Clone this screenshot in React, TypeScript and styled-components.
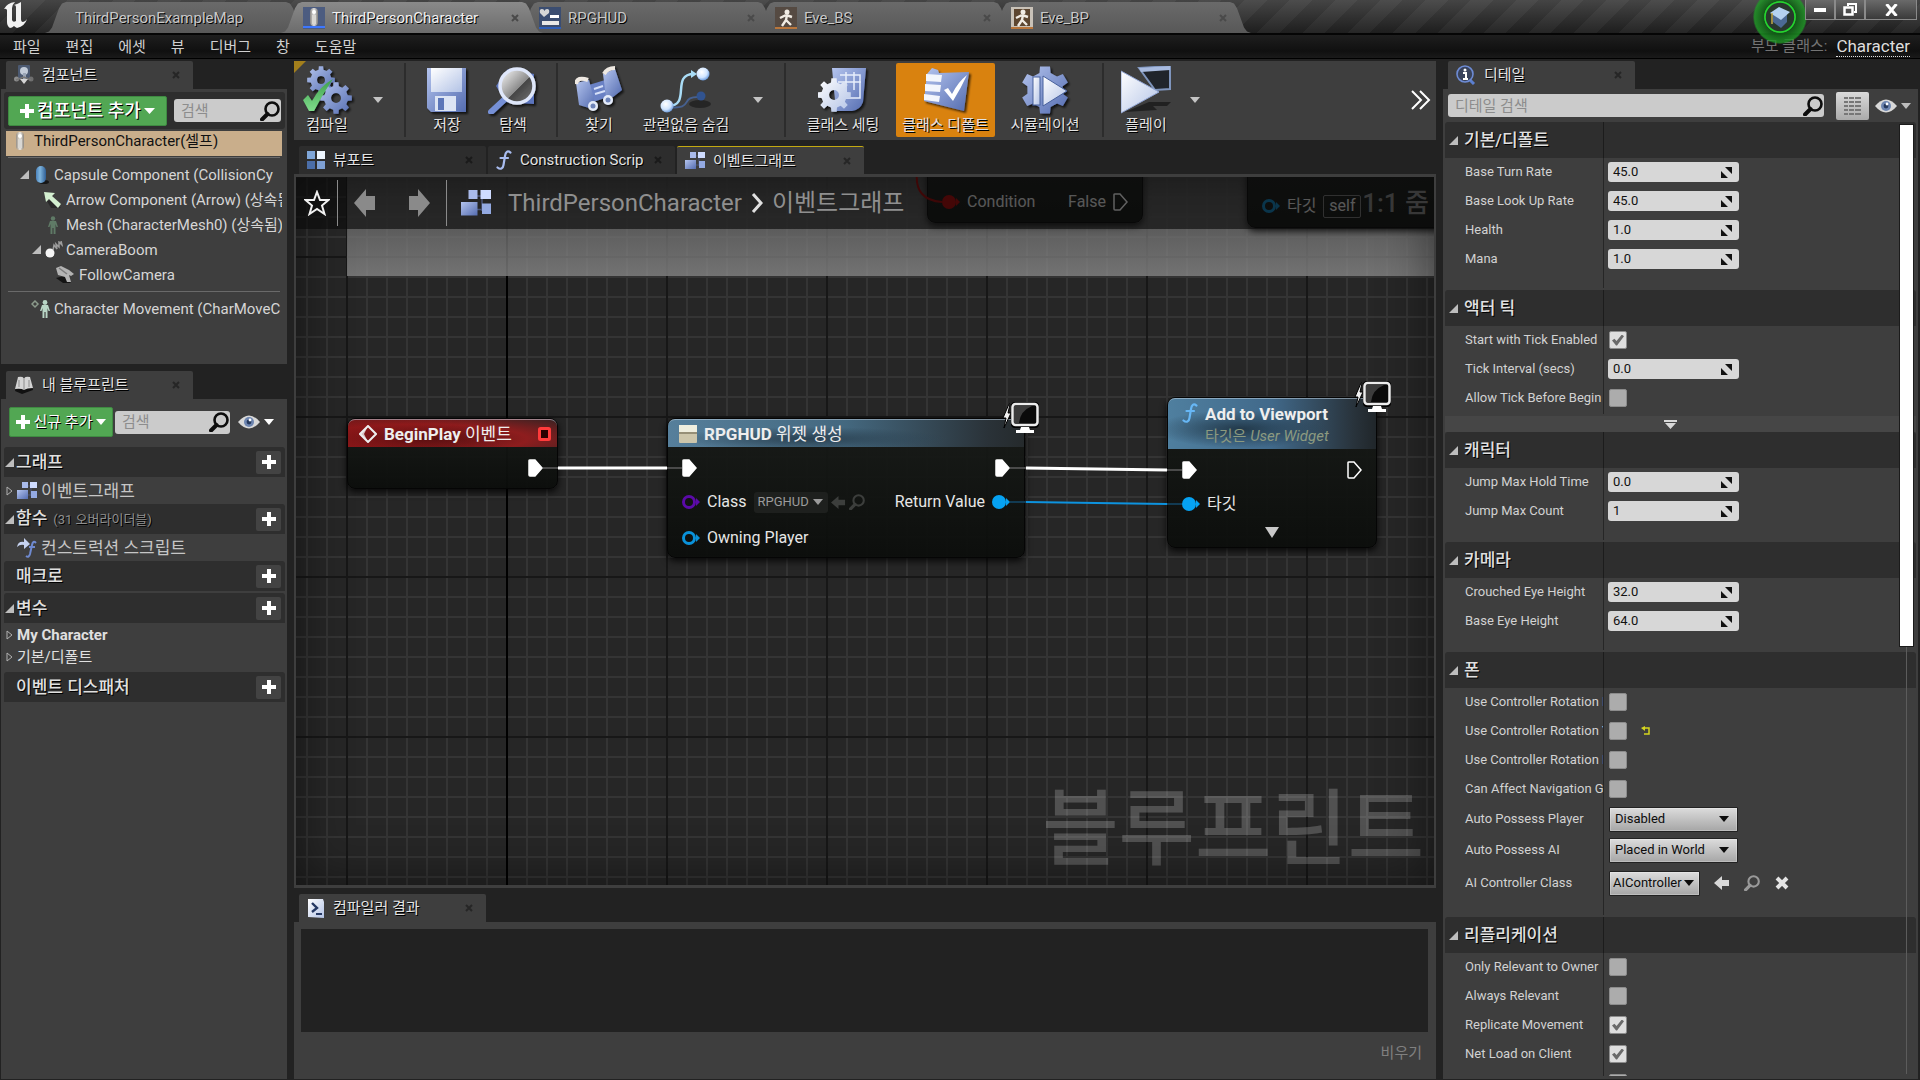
import React, { useState } from 'react';
import styled, { createGlobalStyle, css } from 'styled-components';

const GlobalStyle = createGlobalStyle`
  *, *::before, *::after { box-sizing: border-box; }
  body {
    margin: 0;
    background: #222;
    color: #dcdcdc;
    font-family: Roboto, "Noto Sans CJK KR", sans-serif;
    font-size: 15px;
    line-height: 20px;
    overflow: hidden;
  }
  button, input, select { font: inherit; color: inherit; margin: 0; }
  button { border: 0; padding: 0; background: none; cursor: pointer; }
  svg { display: block; flex: none; }
  h2, h3, p, ul { margin: 0; padding: 0; font: inherit; list-style: none; }
`;

/* ---------- shared ---------- */

const shadowText = css`
  text-shadow: 1px 1px 0 #000;
`;

const Shell = styled.div`
  display: flex;
  flex-direction: column;
  height: 100vh;
`;

const Workspace = styled.div`
  flex: 1;
  min-height: 0;
  display: grid;
  grid-template-columns: 286px minmax(0, 1fr) 475px;
  column-gap: 7px;
  padding: 2px 2px 1px 1px;
`;

const Column = styled.div<{ $gap?: number; $grow?: boolean }>`
  display: flex;
  flex-direction: column;
  flex: ${(p) => (p.$grow ? '1' : 'initial')};
  gap: ${(p) => p.$gap ?? 0}px;
  min-width: 0;
  min-height: 0;
`;

const PanelTabs = styled.div<{ $spaced?: boolean }>`
  display: flex;
  flex: none;
  gap: 2px;
  height: 28px;
  margin-top: ${(p) => (p.$spaced ? 6 : 0)}px;
  padding-left: 5px;
`;

const PanelTab = styled.div<{ $tone?: 'on' | 'off' | 'accent' }>`
  display: flex;
  align-items: center;
  gap: 8px;
  width: 187px;
  padding: 0 12px 0 8px;
  border-radius: 2px 2px 0 0;
  color: #e4e4e4;
  background: ${(p) => (p.$tone === 'off' ? '#2d2d2d' : '#3e3e3e')};
  border-top: ${(p) => (p.$tone === 'accent' ? '1px solid #c3a912' : '0')};
  ${shadowText}
  > span {
    flex: 1;
    white-space: nowrap;
  }
`;

const PanelBody = styled.section<{ $grow?: boolean }>`
  display: flex;
  flex-direction: column;
  flex: ${(p) => (p.$grow ? '1' : 'none')};
  min-height: 0;
  background: #3e3e3e;
`;

const CloseButton = styled.button`
  display: grid;
  place-items: center;
  width: 10px;
  height: 10px;
`;

/* ---------- icons ---------- */

const HiddenDefs = styled.svg`
  position: absolute;
`;

const Defs = () => (
  <HiddenDefs width="0" height="0" aria-hidden="true">
    <defs>
      <linearGradient id="blue" x1="0" y1="0" x2="1" y2="1">
        <stop offset="0" stopColor="#b4c4ee" />
        <stop offset="1" stopColor="#546cb0" />
      </linearGradient>
      <linearGradient id="pale" x1="0" y1="0" x2="1" y2="1">
        <stop offset="0" stopColor="#ffffff" />
        <stop offset="1" stopColor="#b3c3e6" />
      </linearGradient>
      <linearGradient id="green" x1="0" y1="0" x2="0" y2="1">
        <stop offset="0" stopColor="#3fa04d" />
        <stop offset="1" stopColor="#7fdc8b" />
      </linearGradient>
      <linearGradient id="glass" x1="0" y1="0" x2="1" y2="1">
        <stop offset="0" stopColor="#ffffff" />
        <stop offset="0.55" stopColor="#8b8b8b" />
        <stop offset="0.56" stopColor="#454545" />
        <stop offset="1" stopColor="#777" />
      </linearGradient>
      <radialGradient id="ball" cx="0.4" cy="0.35" r="0.7">
        <stop offset="0" stopColor="#ffffff" />
        <stop offset="0.6" stopColor="#cfe4ff" />
        <stop offset="1" stopColor="#5b8fd6" />
      </radialGradient>
      <linearGradient id="stone" x1="0" y1="0" x2="1" y2="0">
        <stop offset="0" stopColor="#8f8a84" />
        <stop offset="0.5" stopColor="#f2f0ec" />
        <stop offset="1" stopColor="#85817b" />
      </linearGradient>
      <linearGradient id="capsule" x1="0" y1="0" x2="1" y2="0">
        <stop offset="0" stopColor="#4b83bd" />
        <stop offset="0.4" stopColor="#7fb5dd" />
        <stop offset="1" stopColor="#2f5f96" />
      </linearGradient>
      <filter id="drop" x="-20%" y="-20%" width="150%" height="150%">
        <feDropShadow dx="2" dy="2" stdDeviation="1" floodColor="#000" floodOpacity="0.7" />
      </filter>
    </defs>
  </HiddenDefs>
);

const gearPath = (cx: number, cy: number, outer: number, inner: number, teeth: number) => {
  const pts: string[] = [];
  const step = (Math.PI * 2) / teeth;
  for (let i = 0; i < teeth; i++) {
    const a = i * step - Math.PI / 2;
    [
      [-0.3, inner],
      [-0.2, outer],
      [0.2, outer],
      [0.3, inner],
    ].forEach(([f, r]) => {
      pts.push(`${(cx + Math.cos(a + f * step) * r).toFixed(2)},${(cy + Math.sin(a + f * step) * r).toFixed(2)}`);
    });
  }
  return `M${pts.join('L')}Z`;
};

const Gear = ({ cx, cy, r, hole, fill, teeth = 8 }: { cx: number; cy: number; r: number; hole: number; fill: string; teeth?: number }) => (
  <path
    d={`${gearPath(cx, cy, r, r * 0.75, teeth)}M${cx - hole},${cy}a${hole},${hole} 0 1,0 ${hole * 2},0a${hole},${hole} 0 1,0 ${-hole * 2},0Z`}
    fill={fill}
    fillRule="evenodd"
  />
);

const CloseIcon = ({ color = '#262626' }: { color?: string }) => (
  <svg width="8" height="8" viewBox="0 0 8 8">
    <path d="M1 1L7 7M7 1L1 7" stroke={color} strokeWidth="2" />
  </svg>
);

const Caret = ({ w = 10, color = '#fff' }: { w?: number; color?: string }) => (
  <svg width={w} height="6" viewBox="0 0 10 6" preserveAspectRatio="none">
    <path d="M0 0H10L5 6Z" fill={color} />
  </svg>
);

const Corner = () => (
  <svg width="9" height="9" viewBox="0 0 9 9">
    <path d="M9 0V9H0Z" fill="#bdbdbd" />
  </svg>
);

const Closed = () => (
  <svg width="7" height="10" viewBox="0 0 7 10">
    <path d="M1 1L6 5L1 9Z" fill="none" stroke="#b0b0b0" />
  </svg>
);

const PlusIcon = ({ size = 14 }: { size?: number }) => (
  <svg width={size} height={size} viewBox="0 0 14 14">
    <path d="M5 0H9V5H14V9H9V14H5V9H0V5H5Z" fill="#fff" />
  </svg>
);

const SearchIcon = ({ color = '#0d0d0d', size = 20 }: { color?: string; size?: number }) => (
  <svg width={size} height={size} viewBox="0 0 20 20">
    <circle cx="12" cy="8" r="6.5" fill="none" stroke={color} strokeWidth="2.6" />
    <path d="M7.5 13L2 18.5" stroke={color} strokeWidth="4" strokeLinecap="round" />
  </svg>
);

const EyeIcon = () => (
  <svg width="22" height="14" viewBox="0 0 22 14">
    <path d="M0 7Q11 -6 22 7Q11 20 0 7Z" fill="#d8d8d8" />
    <circle cx="11" cy="7" r="5" fill="#6d85b0" />
    <circle cx="11" cy="7" r="2.4" fill="#263a5e" />
    <circle cx="12" cy="5" r="1.4" fill="#fff" />
  </svg>
);

const LeftArrow = ({ color = '#d8d8d8', size = 16 }: { color?: string; size?: number }) => (
  <svg width={size} height={size} viewBox="0 0 16 16">
    <path d="M0 8L8 1V5H15V11H8V15Z" fill={color} />
  </svg>
);

const GraphIcon = ({ w = 20 }: { w?: number }) => (
  <svg width={w} height={(w * 18) / 20} viewBox="0 0 20 18">
    <path d="M8 4H14M14 4V14M9 13H14" stroke="#49547a" />
    <rect x="5" y="0" width="6" height="6" fill="#a9baea" />
    <rect x="13" y="0" width="7" height="6" fill="#cfdcff" />
    <rect x="0" y="8" width="11" height="9" fill="url(#blue)" />
    <rect x="14" y="9" width="6" height="7" fill="#93a9e2" />
  </svg>
);

const FuncIcon = ({ color = '#a9bdf0' }: { color?: string }) => (
  <svg width="16" height="20" viewBox="0 0 16 20">
    <path d="M14.5 2.6C11.5 0 9.6 2 9 6L7.5 15C7 18.5 4.5 20 1.5 17.5M4.5 8H12" fill="none" stroke={color} strokeWidth="2.2" strokeLinecap="round" />
  </svg>
);

const ViewportIcon = () => (
  <svg width="18" height="18" viewBox="0 0 18 18">
    <rect x="0" y="0" width="8" height="8" fill="#7fa6d8" />
    <rect x="10" y="0" width="8" height="8" fill="#eef6ff" />
    <rect x="0" y="10" width="8" height="8" fill="#4b6ea8" />
    <rect x="10" y="10" width="8" height="8" fill="#7ea0d4" />
  </svg>
);

const ComponentsIcon = () => (
  <svg width="20" height="20" viewBox="0 0 20 20">
    <rect x="4" y="0" width="12" height="13" rx="1" fill="#4c5a72" />
    <circle cx="10" cy="6" r="4" fill="#c2cbd8" />
    <rect x="9" y="8" width="3" height="6" fill="#9aa5b6" />
    <circle cx="2.5" cy="14" r="2.5" fill="#8d8d8d" />
    <circle cx="17" cy="14" r="2.5" fill="#6f6f6f" />
    <path d="M2 15L10 12L17 15" fill="none" stroke="#777" strokeWidth="1.5" />
    <path d="M6 14H14L10 19Z" fill="#d5d5d5" />
  </svg>
);

const BookIcon = () => (
  <svg width="20" height="19" viewBox="0 0 20 19">
    <path d="M1 15L4 2L10 1L16 2L19 14L8 18Z" fill="#111" />
    <path d="M1 13L4 1Q8 0 10 2Q12 0 16 1L19 12Q13 12 10 14Q7 12 1 13Z" fill="#d4d4d4" />
    <path d="M10 2V14M5 4V11M15 4V11" stroke="#8c8c8c" />
  </svg>
);

const DetailsIcon = () => (
  <svg width="20" height="20" viewBox="0 0 20 20">
    <path d="M13 14L18 19" stroke="#5b7fd0" strokeWidth="3" />
    <circle cx="9" cy="9" r="8" fill="#39435c" stroke="#6d8bd4" strokeWidth="1.6" />
    <path d="M7 8H10V14M7 14H12" fill="none" stroke="#fff" strokeWidth="2" />
    <circle cx="9" cy="5" r="1.5" fill="#fff" />
  </svg>
);

const LogIcon = () => (
  <svg width="18" height="19" viewBox="0 0 18 19">
    <path d="M1 0H16L17 3V19L1 18Z" fill="url(#pale)" />
    <path d="M5 4L10 9L5 13" fill="none" stroke="#253863" strokeWidth="2.4" />
    <path d="M9 15H15" stroke="#253863" strokeWidth="2" />
  </svg>
);

const PawnIcon = ({ framed }: { framed?: boolean }) => (
  <svg width={framed ? 22 : 10} height="22" viewBox={framed ? '0 0 22 22' : '6 0 10 22'}>
    {framed && <rect width="22" height="22" fill="#4c5c80" />}
    {framed && <rect y="19" width="22" height="2" fill="#3d77ff" />}
    <rect x="7" y="1" width="8" height="18" rx="4" fill="url(#stone)" opacity="0.9" />
    <circle cx="11" cy="5" r="2" fill="#fff" />
    <path d="M9 8H13V17H9Z" fill="#d9d7d3" />
  </svg>
);

const WidgetIcon = () => (
  <svg width="22" height="22" viewBox="0 0 22 22">
    <rect width="22" height="22" fill="#3b4d70" />
    <path d="M5 10L1 6Q0 2 3 2Q5 2 5.5 4Q6 2 8 2Q11 2 10 6Z" fill="#d6d6d6" />
    <rect x="11" y="8" width="9" height="3" fill="#fff" />
    <rect x="3" y="14" width="17" height="4" fill="#e8e8e8" />
    <rect y="20" width="22" height="2" fill="#2f5fb8" />
  </svg>
);

const AnimIcon = ({ boxed }: { boxed?: boolean }) => (
  <svg width="22" height="22" viewBox="0 0 22 22">
    <rect width="22" height="22" fill={boxed ? '#c9c2b8' : '#554a42'} />
    {boxed && <rect x="3" y="2" width="16" height="17" fill="#5d4630" />}
    <circle cx="12" cy="5" r="2.5" fill="#f1ece4" />
    <path d="M11 8L5 11M11 8L17 10M12 8L11 13L7 19M11 13L16 18" stroke="#f1ece4" strokeWidth="2.4" fill="none" />
    <rect y="20" width="22" height="2" fill="#b8763c" />
  </svg>
);

const EngineLogo = () => (
  <svg width="26" height="28" viewBox="0 0 26 28">
    <path
      d="M1 8Q4 2 12 1Q9 4 9 7V19Q10 22 13 20V6Q13 4 11 4Q15 3 18 1V18Q18 21 20 21Q22 21 24 18Q22 25 14 27Q12 26 11 25Q9 27 7 27Q4 25 4 21V9Q3 7 1 8Z"
      fill="#f2f2f2"
    />
  </svg>
);

const ArrowComp = () => (
  <svg width="19" height="18" viewBox="0 0 19 18">
    <path d="M4 10L8 9L18 17L8 17Z" fill="#1a1a1a" opacity="0.6" />
    <path d="M1 1L12 2L9 5L18 13L15 17L6 8L3 11Z" fill="#d3efd0" />
  </svg>
);

const humanBody = 'M3 5H9L11 11H9.5L8.5 8V18H6.6V12H5.4V18H3.5V8L2.5 11H1Z';

const Human = () => (
  <svg width="12" height="18" viewBox="0 0 12 18">
    <circle cx="6" cy="2.5" r="2.2" fill="#5f7a66" />
    <path d={humanBody} fill="#5f7a66" />
  </svg>
);

const MovementIcon = () => (
  <svg width="19" height="18" viewBox="0 0 19 18">
    <path d="M4 1L7 4L4 7L1 4Z" fill="none" stroke="#8b9a8b" strokeWidth="1.5" />
    <g transform="translate(8 0)">
      <circle cx="6" cy="2.5" r="2.4" fill="#b9d6c6" />
      <path d={humanBody} fill="#b9d6c6" />
    </g>
  </svg>
);

const CapsuleIcon = () => (
  <svg width="14" height="20" viewBox="0 0 14 20">
    <ellipse cx="9" cy="17" rx="5" ry="2" fill="#161616" />
    <rect x="1" y="1" width="10" height="17" rx="5" fill="url(#capsule)" />
  </svg>
);

const BoomIcon = () => (
  <svg width="18" height="18" viewBox="0 0 18 18">
    <path d="M8 9L9 4L12 8L11 3L14 6L14 1L17 4L16 0" fill="none" stroke="#9c9c9c" strokeWidth="1.5" />
    <circle cx="5" cy="12" r="4.5" fill="#f4f4f4" />
  </svg>
);

const CameraIcon = () => (
  <svg width="20" height="18" viewBox="0 0 20 18">
    <path d="M1 12L9 10L16 17L8 17Z" fill="#141414" />
    <path d="M1 2L6 0L14 4L19 8L16 10L14 9L16 16L12 16L10 11L3 9Z" fill="#b3b3b3" />
    <path d="M4 2L12 8" stroke="#7c7c7c" strokeWidth="1.5" />
  </svg>
);

const CompileIcon = () => (
  <svg width="50" height="48" viewBox="0 0 50 48" filter="url(#drop)">
    <Gear cx={19} cy={14} r={14} hole={4} fill="url(#blue)" />
    <Gear cx={34} cy={32} r={16} hole={5} fill="url(#blue)" />
    <path d="M1 34L6 29L10 35Q18 20 31 13Q22 26 12 45L7 45Z" fill="url(#green)" />
  </svg>
);

const SaveIcon = () => (
  <svg width="40" height="48" viewBox="0 0 40 48" filter="url(#drop)">
    <path d="M0 2H39V46H4L0 42Z" fill="url(#blue)" />
    <rect x="4" y="2" width="31" height="24" fill="url(#pale)" />
    <rect x="8" y="30" width="21" height="15" fill="#dce4f4" />
    <rect x="11" y="32" width="6" height="12" fill="#5b76b8" />
  </svg>
);

const BrowseIcon = () => (
  <svg width="50" height="48" viewBox="0 0 50 48" filter="url(#drop)">
    <path d="M8 20L20 3L46 8V38L18 36Z" fill="#5c74bd" />
    <path d="M17 33L3 46" stroke="#7690d6" strokeWidth="6" strokeLinecap="round" />
    <circle cx="29" cy="20" r="17" fill="url(#glass)" stroke="#dfe7fa" strokeWidth="3.5" />
  </svg>
);

const FindIcon = () => (
  <svg width="48" height="48" viewBox="0 0 48 48" filter="url(#drop)">
    <path d="M14 19L30 14L36 30L18 36Z" fill="#6a81c4" />
    <path d="M1 17L14 14L20 37L14 42L4 39Z" fill="url(#blue)" />
    <path d="M28 8L40 3L47 24L38 31L31 31Z" fill="url(#blue)" />
    <path d="M1 18Q2 10 13 14" fill="none" stroke="#efe9e2" strokeWidth="4" />
    <path d="M29 8Q32 2 40 2" fill="none" stroke="#efe9e2" strokeWidth="4" />
    <path d="M19 23L28 20M20 28L30 25" stroke="#d6e0f8" strokeWidth="2" />
    <circle cx="18" cy="40" r="5" fill="#e4ebf9" />
    <circle cx="33" cy="34" r="5" fill="#e4ebf9" />
    <circle cx="18" cy="40" r="2.5" fill="#6d83b8" />
    <circle cx="33" cy="34" r="2.5" fill="#6d83b8" />
  </svg>
);

const HideIcon = () => (
  <svg width="52" height="48" viewBox="0 0 52 48">
    <ellipse cx="40" cy="38" rx="11" ry="4" fill="#151515" opacity="0.6" />
    <path d="M8 41C36 44 18 30 40 31" fill="none" stroke="#46608f" strokeWidth="2" />
    <path d="M8 40C32 40 10 8 34 8" fill="none" stroke="#a9dcf6" strokeWidth="2.5" />
    <path d="M31 4L37 8L31 12Z" fill="#a9dcf6" />
    <circle cx="43" cy="8" r="6.5" fill="url(#ball)" />
    <circle cx="41" cy="30" r="4.5" fill="#31538f" />
    <circle cx="7" cy="40" r="6.5" fill="url(#ball)" />
  </svg>
);

const ClassSettingsIcon = () => (
  <svg width="50" height="48" viewBox="0 0 50 48" filter="url(#drop)">
    <path d="M14 2H48L45 36Q42 44 34 45H18Z" fill="url(#blue)" />
    <path d="M22 9H42V32H24M28 6V30M36 6V24M20 16H43" fill="none" stroke="#e7eefc" strokeWidth="1.5" />
    <Gear cx={16} cy={29} r={17} hole={5} fill="url(#pale)" />
  </svg>
);

const ClassDefaultsIcon = () => (
  <svg width="48" height="48" viewBox="0 0 48 48" filter="url(#drop)">
    <path d="M5 8L10 2L16 4L17 7L47 6L42 45L2 35Z" fill="url(#blue)" />
    <path d="M4 8L20 9L19 16L4 15ZM3 18L19 19L18 26L3 25ZM2 28L18 30L17 36L2 34Z" fill="#f3f6fc" />
    <path d="M22 24L26 22L30 28Q36 16 45 9Q39 22 31 35Z" fill="#fff" />
  </svg>
);

const SimulateIcon = () => (
  <svg width="48" height="48" viewBox="0 0 48 48" filter="url(#drop)">
    <Gear cx={24} cy={24} r={24} hole={1} fill="url(#blue)" teeth={6} />
    <rect x="12" y="11" width="7" height="28" fill="url(#pale)" stroke="#47609c" />
    <path d="M22 10L46 25L22 40Z" fill="url(#pale)" stroke="#47609c" />
  </svg>
);

const PlayIcon = () => (
  <svg width="50" height="48" viewBox="0 0 50 48">
    <path d="M4 46L28 36L50 36L46 40L32 40L36 44Z" fill="#151515" opacity="0.7" />
    <path d="M18 2L49 0V23L34 24Z" fill="#20242b" stroke="#7f95bd" strokeWidth="2" />
    <path d="M18 2L49 0V4L20 6Z" fill="#a9bbdf" />
    <path d="M0 5L38 26L0 47Z" fill="url(#pale)" stroke="#93a7d6" />
  </svg>
);

/* ---------- title bar ---------- */

const TitleBar = styled.header`
  display: flex;
  align-items: flex-end;
  flex: none;
  height: 35px;
  padding-left: 45px;
  border-bottom: 2px solid #050505;
  position: relative;
  background: linear-gradient(rgba(90, 90, 90, 0.55), rgba(20, 20, 20, 0.55)),
    repeating-linear-gradient(135deg, #2a2a2a 0 16px, #3c3c3c 16px 32px);
`;

const Logo = styled.div`
  position: absolute;
  left: 3px;
  top: 1px;
`;

const DocTabs = styled.nav`
  display: flex;
  flex: 1;
  min-width: 0;
`;

const DocTab = styled.div<{ $active?: boolean; $plain?: boolean }>`
  display: flex;
  align-items: center;
  gap: 7px;
  width: 262px;
  height: 31px;
  padding: 0 23px 0 ${(p) => (p.$plain ? 30 : 22)}px;
  margin-right: -26px;
  color: ${(p) => (p.$active ? '#f0f0f0' : '#c8c8c8')};
  background: ${(p) => (p.$active ? 'linear-gradient(#8a8a8a, #6c6c6c)' : 'linear-gradient(#6a6a6a, #585858)')};
  z-index: ${(p) => (p.$active ? 2 : 1)};
  clip-path: polygon(
    0 100%, 4px 95%, 7px 82%, 14px 20%, 17px 5%, 21px 0,
    calc(100% - 21px) 0, calc(100% - 17px) 5%, calc(100% - 14px) 20%, calc(100% - 7px) 82%, calc(100% - 4px) 95%, 100% 100%
  );
  ${shadowText}
  > span { flex: 1; white-space: nowrap; }
`;

const TutorialOrb = styled.button`
  position: absolute;
  right: 113px;
  top: -11px;
  width: 54px;
  height: 56px;
  z-index: 3;
`;

const WindowButtons = styled.div`
  display: flex;
  align-self: flex-start;
  padding-right: 3px;
  z-index: 4;
`;

const WindowButton = styled.button<{ $wide?: boolean }>`
  display: grid;
  place-items: center;
  width: ${(p) => (p.$wide ? 52 : 30)}px;
  height: 20px;
  border: 1px solid #8a8a8a;
  border-top: 0;
  background: linear-gradient(#6a6a6a, #3a3a3a);
`;

const MenuBar = styled.nav`
  display: flex;
  align-items: center;
  flex: none;
  height: 24px;
  padding: 0 10px 0 13px;
  gap: 25px;
  background: linear-gradient(#1e1e1e, #101010 70%, #1a1a1a);
  border-bottom: 1px solid #000;
  color: #d0d0d0;
`;

const ParentClass = styled.div`
  display: flex;
  gap: 9px;
  margin-left: auto;
  color: #747474;
  a {
    color: #dedede;
    font-size: 17px;
    text-decoration: none;
    border-bottom: 1px dotted #dedede;
  }
`;

const docs = [
  { name: 'ThirdPersonExampleMap', icon: null },
  { name: 'ThirdPersonCharacter', icon: <PawnIcon framed />, active: true },
  { name: 'RPGHUD', icon: <WidgetIcon /> },
  { name: 'Eve_BS', icon: <AnimIcon /> },
  { name: 'Eve_BP', icon: <AnimIcon boxed /> },
];

const TopBars = () => (
  <>
    <TitleBar>
      <Logo><EngineLogo /></Logo>
      <DocTabs>
        {docs.map((d) => (
          <DocTab key={d.name} $active={d.active} $plain={!d.icon}>
            {d.icon}
            <span>{d.name}</span>
            {d.icon && <CloseButton aria-label="탭 닫기"><CloseIcon color="#4a4a4a" /></CloseButton>}
          </DocTab>
        ))}
      </DocTabs>
      <TutorialOrb aria-label="튜토리얼">
        <svg width="54" height="56" viewBox="0 0 54 56">
          <defs>
            <radialGradient id="orb">
              <stop offset="0.5" stopColor="#0e3a12" />
              <stop offset="0.56" stopColor="#22c02a" />
              <stop offset="0.6" stopColor="#125c17" stopOpacity="0.9" />
              <stop offset="0.94" stopColor="#1f9c26" stopOpacity="0.8" />
              <stop offset="1" stopColor="#1f9c26" stopOpacity="0.2" />
            </radialGradient>
          </defs>
          <circle cx="27" cy="28" r="27" fill="url(#orb)" />
          <circle cx="27" cy="28" r="15" fill="#28382c" stroke="#25d62f" strokeWidth="1.5" />
          <path d="M20 25V33L28 39L34 33V25Z" fill="#4c6a94" />
          <path d="M17 24L26 18L37 23L28 31Z" fill="#b4d2f0" />
          <path d="M19 24V35" stroke="#c5a94a" strokeWidth="1.5" />
        </svg>
      </TutorialOrb>
      <WindowButtons>
        <WindowButton aria-label="최소화">
          <svg width="12" height="4"><rect width="12" height="4" fill="#fff" /></svg>
        </WindowButton>
        <WindowButton aria-label="이전 크기로">
          <svg width="14" height="13" viewBox="0 0 14 13">
            <path d="M5 3V1H13V9H11" fill="none" stroke="#fff" strokeWidth="2" />
            <rect x="1.5" y="4.5" width="8" height="7" fill="none" stroke="#fff" strokeWidth="2.5" />
          </svg>
        </WindowButton>
        <WindowButton $wide aria-label="닫기">
          <svg width="13" height="12" viewBox="0 0 13 12">
            <path d="M1.5 0L11.5 12M11.5 0L1.5 12" stroke="#fff" strokeWidth="3" />
          </svg>
        </WindowButton>
      </WindowButtons>
    </TitleBar>
    <MenuBar>
      {['파일', '편집', '에셋', '뷰', '디버그', '창', '도움말'].map((m) => (
        <button key={m}>{m}</button>
      ))}
      <ParentClass>
        <span>부모 클래스:</span>
        <a href="#character">Character</a>
      </ParentClass>
    </MenuBar>
  </>
);

/* ---------- left column ---------- */

const GreenButton = styled.button<{ $large?: boolean }>`
  display: flex;
  align-items: center;
  justify-content: center;
  gap: ${(p) => (p.$large ? 3 : 4)}px;
  width: ${(p) => (p.$large ? 159 : 104)}px;
  height: 30px;
  border: 1px solid #3f8a42;
  border-radius: 2px;
  background: #52a753;
  color: #fff;
  font-size: ${(p) => (p.$large ? 18 : 15)}px;
  font-weight: ${(p) => (p.$large ? 500 : 400)};
  white-space: nowrap;
  ${shadowText}
`;

const SearchField = styled.label`
  display: flex;
  align-items: center;
  flex: 1;
  min-width: 0;
  height: 23px;
  padding: 0 1px 0 7px;
  border-radius: 3px;
  background: #cbcbcb;
  input {
    flex: 1;
    min-width: 0;
    width: 0;
    padding: 0;
    border: 0;
    outline: 0;
    background: none;
    color: #222;
    &::placeholder { color: #8d8d8d; opacity: 1; }
  }
`;

const ComponentActions = styled.div`
  display: flex;
  align-items: center;
  gap: 7px;
  height: 37px;
  margin: 3px 2px 2px 3px;
  padding: 0 4px;
  border-radius: 3px;
  background: #2e2e2e;
`;

const ComponentTree = styled.ul`
  height: 233px;
  padding: 0 5px;
`;

const TreeRow = styled.li<{ $indent: number; $selected?: boolean }>`
  display: flex;
  align-items: ${(p) => (p.$selected ? 'flex-start' : 'center')};
  gap: 4px;
  height: 25px;
  padding-left: ${(p) => p.$indent}px;
  overflow: hidden;
  white-space: nowrap;
  color: ${(p) => (p.$selected ? '#111' : '#d6d6d6')};
  background: ${(p) => (p.$selected ? '#c9ae8b' : 'none')};
`;

const TreeIcon = styled.span<{ $w: number }>`
  display: flex;
  justify-content: center;
  width: ${(p) => p.$w}px;
  flex: none;
`;

const TreeLine = styled.li<{ $tight?: boolean }>`
  height: 1px;
  margin: ${(p) => (p.$tight ? '1px 2px 4px' : '4px 2px')};
  background: #6a6a6a;
`;

const BlueprintActions = styled.div`
  display: flex;
  align-items: center;
  gap: 2px;
  height: 48px;
  padding: 0 13px 2px 8px;
`;

const ViewOptions = styled.button`
  display: flex;
  align-items: center;
  gap: 4px;
  padding-left: 6px;
`;

const SectionHead = styled.div<{ $gap?: number }>`
  display: flex;
  align-items: center;
  gap: 2px;
  height: 30px;
  margin: 0 2px ${(p) => p.$gap ?? 0}px 3px;
  padding: 0 4px 0 1px;
  border-radius: 3px 3px 0 0;
  background: #2e2e2e;
  h3 {
    flex: 1;
    font-size: 17px;
    font-weight: 500;
    color: #e0e0e0;
    ${shadowText}
  }
  small {
    margin-left: 6px;
    font-size: 13px;
    font-weight: 400;
    color: #8f8f8f;
  }
`;

const Twisty = styled.span`
  display: flex;
  align-items: center;
  width: 9px;
  height: 9px;
`;

const AddButton = styled.button`
  display: grid;
  place-items: center;
  width: 25px;
  height: 23px;
  border-radius: 2px;
  background: #434343;
`;

const BlueprintItem = styled.div<{ $small?: boolean; $bold?: boolean; $inset?: boolean }>`
  display: flex;
  align-items: center;
  gap: 4px;
  height: ${(p) => (p.$small ? 22 : 27)}px;
  padding-left: ${(p) => (p.$inset ? 16 : 5)}px;
  white-space: nowrap;
  color: ${(p) => (p.$small ? '#e0e0e0' : '#c6c6c6')};
  font-size: ${(p) => (p.$small ? 15 : 17)}px;
  font-weight: ${(p) => (p.$bold ? 700 : 400)};
`;

const Group = styled.div`
  padding: 1px 0 4px;
`;

const LeftColumn = () => (
  <Column $gap={7}>
    <div>
      <PanelTabs>
        <PanelTab>
          <ComponentsIcon />
          <span>컴포넌트</span>
          <CloseButton aria-label="컴포넌트 닫기"><CloseIcon /></CloseButton>
        </PanelTab>
      </PanelTabs>
      <PanelBody>
        <ComponentActions>
          <GreenButton $large><PlusIcon />컴포넌트 추가<Caret w={11} /></GreenButton>
          <SearchField>
            <input type="text" placeholder="검색" aria-label="컴포넌트 검색" />
            <SearchIcon />
          </SearchField>
        </ComponentActions>
        <ComponentTree>
          <TreeRow $indent={4} $selected>
            <TreeIcon $w={20}><PawnIcon /></TreeIcon>ThirdPersonCharacter(셀프)
          </TreeRow>
          <TreeLine $tight />
          <TreeRow $indent={14}><Corner /><TreeIcon $w={17}><CapsuleIcon /></TreeIcon>Capsule Component (CollisionCy</TreeRow>
          <TreeRow $indent={37}><TreeIcon $w={19}><ArrowComp /></TreeIcon>Arrow Component (Arrow) (상속됨</TreeRow>
          <TreeRow $indent={37}><TreeIcon $w={19}><Human /></TreeIcon>Mesh (CharacterMesh0) (상속됨)</TreeRow>
          <TreeRow $indent={26}><Corner /><TreeIcon $w={17}><BoomIcon /></TreeIcon>CameraBoom</TreeRow>
          <TreeRow $indent={49}><TreeIcon $w={20}><CameraIcon /></TreeIcon>FollowCamera</TreeRow>
          <TreeLine />
          <TreeRow $indent={25}><TreeIcon $w={19}><MovementIcon /></TreeIcon>Character Movement (CharMoveC</TreeRow>
        </ComponentTree>
      </PanelBody>
    </div>
    <Column $grow>
      <PanelTabs>
        <PanelTab>
          <BookIcon />
          <span>내 블루프린트</span>
          <CloseButton aria-label="내 블루프린트 닫기"><CloseIcon /></CloseButton>
        </PanelTab>
      </PanelTabs>
      <PanelBody $grow>
        <BlueprintActions>
          <GreenButton><PlusIcon />신규 추가<Caret w={10} /></GreenButton>
          <SearchField>
            <input type="text" placeholder="검색" aria-label="블루프린트 검색" />
            <SearchIcon />
          </SearchField>
          <ViewOptions aria-label="보기 옵션"><EyeIcon /><Caret /></ViewOptions>
        </BlueprintActions>
        <SectionHead><Twisty><Corner /></Twisty><h3>그래프</h3><AddButton aria-label="그래프 추가"><PlusIcon /></AddButton></SectionHead>
        <BlueprintItem><Closed /><GraphIcon />이벤트그래프</BlueprintItem>
        <SectionHead><Twisty><Corner /></Twisty><h3>함수<small>(31 오버라이더블)</small></h3><AddButton aria-label="함수 추가"><PlusIcon /></AddButton></SectionHead>
        <BlueprintItem $inset>
          <svg width="20" height="20" viewBox="0 0 20 20">
            <path d="M0 9Q1 3 7 4V0L13 6L7 11V7Q3 6 0 9Z" fill="#c6d2f0" />
            <path d="M19 5Q16 2 15 7L13 16Q12 20 9 18M12 9H18" fill="none" stroke="#6f8ad0" strokeWidth="2" />
          </svg>
          컨스트럭션 스크립트
        </BlueprintItem>
        <SectionHead $gap={2}><Twisty /><h3>매크로</h3><AddButton aria-label="매크로 추가"><PlusIcon /></AddButton></SectionHead>
        <SectionHead><Twisty><Corner /></Twisty><h3>변수</h3><AddButton aria-label="변수 추가"><PlusIcon /></AddButton></SectionHead>
        <Group>
          <BlueprintItem $small $bold><Closed />My Character</BlueprintItem>
          <BlueprintItem $small><Closed />기본/디폴트</BlueprintItem>
        </Group>
        <SectionHead><Twisty /><h3>이벤트 디스패처</h3><AddButton aria-label="이벤트 디스패처 추가"><PlusIcon /></AddButton></SectionHead>
      </PanelBody>
    </Column>
  </Column>
);

/* ---------- toolbar ---------- */

const Toolbar = styled.div`
  display: flex;
  align-items: stretch;
  flex: none;
  height: 79px;
  padding: 2px 5px 3px 2px;
  margin-bottom: 6px;
  background: linear-gradient(135deg, #a37f1c 8px, #3e3e3e 9px);
`;

const ToolGroup = styled.div<{ $pad: string }>`
  display: flex;
  align-items: stretch;
  padding: ${(p) => p.$pad};
  border-right: 2px solid #2c2c2c;
  &:last-of-type { border-right: 0; }
`;

const ToolButton = styled.button<{ $w: number; $active?: boolean }>`
  display: flex;
  flex-direction: column;
  align-items: center;
  gap: 1px;
  width: ${(p) => p.$w}px;
  padding-top: 3px;
  border-radius: 2px;
  background: ${(p) => (p.$active ? '#d9820f' : 'none')};
  color: #e2e2e2;
  white-space: nowrap;
  ${shadowText}
`;

const DropButton = styled.button<{ $w: number }>`
  display: grid;
  place-items: center;
  width: ${(p) => p.$w}px;
  padding-bottom: 1px;
`;

const MoreButton = styled.button`
  margin-left: auto;
`;

const EditorToolbar = () => (
  <Toolbar>
    <ToolGroup $pad="0 6px 0 0">
      <ToolButton $w={62}><CompileIcon />컴파일</ToolButton>
      <DropButton $w={40} aria-label="컴파일 옵션"><Caret color="#c4c4c4" /></DropButton>
    </ToolGroup>
    <ToolGroup $pad="0 10px 0 8px">
      <ToolButton $w={66}><SaveIcon />저장</ToolButton>
      <ToolButton $w={66}><BrowseIcon />탐색</ToolButton>
    </ToolGroup>
    <ToolGroup $pad="0 8px">
      <ToolButton $w={66}><FindIcon />찾기</ToolButton>
      <ToolButton $w={108}><HideIcon />관련없음 숨김</ToolButton>
      <DropButton $w={36} aria-label="숨김 옵션"><Caret color="#c4c4c4" /></DropButton>
    </ToolGroup>
    <ToolGroup $pad="0 7px 0 4px">
      <ToolButton $w={106}><ClassSettingsIcon />클래스 세팅</ToolButton>
      <ToolButton $w={99} $active><ClassDefaultsIcon />클래스 디폴트</ToolButton>
      <ToolButton $w={100}><SimulateIcon />시뮬레이션</ToolButton>
    </ToolGroup>
    <ToolGroup $pad="0 0 0 9px">
      <ToolButton $w={66}><PlayIcon />플레이</ToolButton>
      <DropButton $w={32} aria-label="플레이 옵션"><Caret color="#c4c4c4" /></DropButton>
    </ToolGroup>
    <MoreButton aria-label="도구 더 보기">
      <svg width="20" height="20" viewBox="0 0 20 20">
        <path d="M1 1L10 10L1 19M9 1L18 10L9 19" fill="none" stroke="#fff" strokeWidth="2" />
      </svg>
    </MoreButton>
  </Toolbar>
);

/* ---------- graph ---------- */

const GraphFrame = styled.section`
  flex: 1;
  min-height: 0;
  display: flex;
  padding: 3px 2px;
  background: #3e3e3e;
`;

const Canvas = styled.div`
  position: relative;
  flex: 1;
  overflow: hidden;
  background-color: #262626;
  background-image:
    linear-gradient(90deg, #000 2px, transparent 2px),
    linear-gradient(90deg, #171717 2px, transparent 2px),
    linear-gradient(#171717 2px, transparent 2px),
    linear-gradient(90deg, #343434 2px, transparent 2px),
    linear-gradient(#343434 2px, transparent 2px);
  background-size: 4000px 100%, 160px 100%, 100% 160px, 20px 100%, 100% 20px;
  background-position: 210px 0, 50px 0, 0 79px, 10px 0, 0 19px;
`;

const Vignette = styled.div`
  position: absolute;
  inset: 0;
  box-shadow: inset 0 0 50px rgba(0, 0, 0, 0.5);
  pointer-events: none;
`;

const CommentBox = styled.div`
  position: absolute;
  left: 51px;
  right: 0;
  top: 0;
  height: 99px;
  background: linear-gradient(rgba(110, 110, 110, 0.75) 50%, rgba(140, 140, 140, 0.75));
`;

const Watermark = styled.div`
  position: absolute;
  right: 10px;
  bottom: 10px;
  font-size: 83px;
  line-height: 90px;
  font-weight: 500;
  color: rgba(255, 255, 255, 0.2);
`;

const Breadcrumb = styled.div`
  position: absolute;
  inset: 0 0 auto 0;
  display: flex;
  align-items: center;
  height: 52px;
  background: rgba(10, 10, 10, 0.65);
  color: #8f8f8f;
  font-size: 24px;
  line-height: 32px;
`;

const CrumbButton = styled.button<{ $w: number; $rule?: boolean }>`
  display: grid;
  place-items: center;
  width: ${(p) => p.$w}px;
  height: 46px;
  border-right: ${(p) => (p.$rule ? '1px solid #8a8a8a' : '0')};
`;

const CrumbPath = styled.div`
  display: flex;
  align-items: center;
  gap: 9px;
  padding-left: 14px;
  svg:first-child { margin-right: 8px; }
`;

const ZoomLabel = styled.span`
  margin-left: auto;
  padding-right: 5px;
  font-size: 26px;
  font-weight: 500;
  color: #373737;
`;

const Wires = styled.svg`
  position: absolute;
  inset: 0;
  width: 100%;
  height: 100%;
  fill: none;
  pointer-events: none;
`;

const NodeBox = styled.article<{ $x: number; $y: number; $w: number; $h: number }>`
  position: absolute;
  left: ${(p) => p.$x}px;
  top: ${(p) => p.$y}px;
  width: ${(p) => p.$w}px;
  height: ${(p) => p.$h}px;
  border: 1px solid #050505;
  border-radius: 8px;
  background: linear-gradient(rgba(24, 27, 24, 0.94), rgba(11, 13, 11, 0.94));
  box-shadow: 0 3px 7px rgba(0, 0, 0, 0.8);
  color: #e6e6e6;
  font-size: 16px;
`;

const NodeHead = styled.header<{ $tone: 'red' | 'blue' | 'func' }>`
  display: flex;
  align-items: center;
  gap: 7px;
  height: 28px;
  padding: 0 6px 0 11px;
  border-radius: 7px 7px 0 0;
  border-top: 1px solid rgba(190, 210, 225, 0.55);
  color: #eee;
  font-size: 17px;
  white-space: nowrap;
  b { font-weight: 700; }
  ${(p) =>
    p.$tone === 'red' &&
    css`background: linear-gradient(90deg, rgba(140, 18, 20, 0.5), rgba(140, 18, 20, 0) 75%), radial-gradient(ellipse at 35% 70%, #4a0f10 0, #8e1d1e 55%, #3a2222 100%);`}
  ${(p) =>
    p.$tone === 'blue' &&
    css`background: radial-gradient(ellipse at 40% 70%, #2b4252 0, rgba(43, 66, 82, 0) 45%), linear-gradient(90deg, #567f9b, #44687f 50%, #2a3238 90%, #252a2c);`}
  ${(p) =>
    p.$tone === 'func' &&
    css`
      height: 51px;
      align-items: flex-start;
      padding: 4px 6px 0 14px;
      background: radial-gradient(ellipse at 35% 60%, #22394a 0, rgba(43, 66, 82, 0) 45%), linear-gradient(90deg, #4f7f9f, #41698a 50%, #28323a 90%, #20262a);
    `}
  > svg:last-child:not(:first-child) { margin-left: auto; }
`;

const HeadLines = styled.div`
  display: flex;
  flex-direction: column;
  line-height: 22px;
  p { font-size: 15px; color: #8c9a80; }
`;

const PinRow = styled.div<{ $h: number }>`
  display: flex;
  align-items: center;
  justify-content: space-between;
  height: ${(p) => p.$h}px;
  padding: 0 14px;
`;

const Pin = styled.div`
  display: flex;
  align-items: center;
  gap: 7px;
  white-space: nowrap;
`;

const ClassTools = styled.div`
  display: flex;
  align-items: center;
  gap: 3px;
`;

const ClassPick = styled.div`
  display: flex;
  align-items: center;
  position: relative;
  > select {
    appearance: none;
    width: 74px;
    height: 21px;
    padding: 0 4px;
    border: 0;
    border-radius: 3px;
    background: #1e201e;
    color: #9b9b9b;
    font-size: 13px;
  }
  > svg { position: absolute; right: 5px; pointer-events: none; }
`;

const Badge = styled.div`
  position: absolute;
  right: -16px;
  top: -18px;
`;

const ExecPin = ({ filled = true, color = '#fff' }: { filled?: boolean; color?: string }) => (
  <svg width="15" height="18" viewBox="0 0 15 18">
    <path d="M1 1.5Q1 1 2 1H7L14 9L7 17H2Q1 17 1 16Z" fill={filled ? color : 'none'} stroke={color} strokeWidth="1.5" />
  </svg>
);

const DataPin = ({ color, filled }: { color: string; filled?: boolean }) => (
  <svg width="18" height="14" viewBox="0 0 18 14">
    <circle cx="7" cy="7" r={filled ? 7 : 5.5} fill={filled ? color : 'none'} stroke={color} strokeWidth={filled ? 0 : 3} />
    <path d="M14 3L18 7L14 11Z" fill={color} />
  </svg>
);

const MonitorBadge = () => (
  <Badge>
    <svg width="38" height="34" viewBox="0 0 38 34">
      <path d="M7 3L1 17H4L2 27L9 12H6L8 3Z" fill="#f2f2f2" stroke="#000" />
      <rect x="9" y="1" width="28" height="26" rx="4" fill="#000" />
      <rect x="10.5" y="3" width="25" height="21" rx="3" fill="#0a0a0a" stroke="#ececec" strokeWidth="2.5" />
      <path d="M12 22V5H30Q18 10 17 22Z" fill="#3c3c3c" />
      <path d="M19 26H27L28 29H32V32H14V29H18Z" fill="#fff" />
    </svg>
  </Badge>
);

const SelfValue = styled.span`
  display: grid;
  place-items: center;
  width: 38px;
  height: 23px;
  border: 1px solid #777;
  border-radius: 2px;
`;

const Collapse = styled.button`
  display: block;
  margin: 10px auto 0;
`;

const NodeFoot = styled.div`
  display: flex;
  flex-direction: column;
  justify-content: flex-end;
  height: 100%;
  padding-bottom: 2px;
`;

const Graph = () => (
  <GraphFrame>
    <Canvas>
      <CommentBox />
      <Watermark>블루프린트</Watermark>
      <Vignette />

      <NodeBox $x={631} $y={-60} $w={216} $h={106}>
        <NodeFoot>
          <PinRow $h={36}>
            <Pin><DataPin color="#b00000" filled />Condition</Pin>
            <Pin>False<ExecPin filled={false} /></Pin>
          </PinRow>
        </NodeFoot>
      </NodeBox>
      <NodeBox $x={951} $y={-60} $w={230} $h={111}>
        <NodeFoot>
          <PinRow $h={38}>
            <Pin><DataPin color="#0a84c4" />타깃<SelfValue>self</SelfValue></Pin>
          </PinRow>
        </NodeFoot>
      </NodeBox>

      <NodeBox $x={51} $y={241} $w={211} $h={71}>
        <NodeHead $tone="red">
          <svg width="18" height="18" viewBox="0 0 18 18">
            <path d="M9 1L17 9L9 17L1 9Z" fill="none" stroke="#eee" strokeWidth="2" />
            <path d="M9 1L5 9L9 17L1 9Z" fill="#eee" opacity="0.8" />
          </svg>
          <span><b>BeginPlay</b> 이벤트</span>
          <svg width="13" height="14" viewBox="0 0 13 14"><rect x="1.5" y="1.5" width="10" height="11" rx="1" fill="#2a0000" stroke="#ff3b3b" strokeWidth="3" /></svg>
        </NodeHead>
        <PinRow $h={41}><span /><ExecPin /></PinRow>
      </NodeBox>

      <NodeBox $x={371} $y={241} $w={358} $h={140}>
        <NodeHead $tone="blue">
          <svg width="18" height="18" viewBox="0 0 18 18"><rect width="18" height="18" rx="1" fill="#cdc6ab" /><rect width="18" height="7" fill="#efeede" /><path d="M0 8H18" stroke="#837d66" strokeWidth="1.5" /></svg>
          <span><b>RPGHUD</b> 위젯 생성</span>
        </NodeHead>
        <PinRow $h={41}><ExecPin /><ExecPin /></PinRow>
        <PinRow $h={28}>
          <Pin>
            <DataPin color="#5b0aa8" />
            <label htmlFor="pin-class">Class</label>
            <ClassTools>
              <ClassPick>
                <select id="pin-class" defaultValue="RPGHUD"><option>RPGHUD</option></select>
                <Caret color="#9b9b9b" />
              </ClassPick>
              <LeftArrow color="#3c3e3c" size={15} />
              <SearchIcon color="#3c3e3c" size={16} />
            </ClassTools>
          </Pin>
          <Pin>Return Value<DataPin color="#06a2f2" filled /></Pin>
        </PinRow>
        <PinRow $h={44}><Pin><DataPin color="#0a92da" />Owning Player</Pin></PinRow>
        <MonitorBadge />
      </NodeBox>

      <NodeBox $x={871} $y={220} $w={210} $h={151}>
        <NodeHead $tone="func">
          <FuncIcon color="#67b7f5" />
          <HeadLines>
            <b>Add to Viewport</b>
            <p>타깃은 <em>User Widget</em></p>
          </HeadLines>
        </NodeHead>
        <PinRow $h={42}><ExecPin /><ExecPin filled={false} /></PinRow>
        <PinRow $h={26}><Pin><DataPin color="#06a2f2" filled />타깃</Pin></PinRow>
        <Collapse aria-label="펼치기">
          <svg width="14" height="11" viewBox="0 0 14 11"><path d="M0 0H14L7 11Z" fill="#c8c8c8" /></svg>
        </Collapse>
        <MonitorBadge />
      </NodeBox>

      <Wires>
        <path d="M621 -5Q618 23 646 25" stroke="#9c0000" strokeWidth="2" />
        <path d="M262 291H371M730 291L871 293" stroke="#fff" strokeWidth="3" />
        <path d="M247 291H262M371 291H386M714 291H730M871 293H886" stroke="#4a4a4a" strokeWidth="2" />
        <path d="M730 325L871 327" stroke="#0d93df" strokeWidth="2" />
        <path d="M714 325H730M871 327H886" stroke="#123a52" strokeWidth="2" />
      </Wires>

      <Breadcrumb>
        <CrumbButton $w={42} $rule aria-label="즐겨찾기">
          <svg width="26" height="26" viewBox="0 0 26 26"><path d="M13 2L16 10H24.5L18 15.5L20.5 24L13 19L5.5 24L8 15.5L1.5 10H10Z" fill="none" stroke="#f2f2f2" strokeWidth="2" /></svg>
        </CrumbButton>
        <CrumbButton $w={54} aria-label="뒤로"><svg width="22" height="28" viewBox="0 0 22 28"><path d="M0 14L12 0V7H21V21H12V28Z" fill="#8a8a8a" /></svg></CrumbButton>
        <CrumbButton $w={55} $rule aria-label="앞으로"><svg width="22" height="28" viewBox="0 0 22 28"><path d="M22 14L10 0V7H1V21H10V28Z" fill="#8a8a8a" /></svg></CrumbButton>
        <CrumbPath>
          <GraphIcon w={30} />
          <span>ThirdPersonCharacter</span>
          <svg width="12" height="20" viewBox="0 0 12 20"><path d="M2 1L10 10L2 19" fill="none" stroke="#e0e0e0" strokeWidth="3" /></svg>
          <span>이벤트그래프</span>
        </CrumbPath>
        <ZoomLabel>1:1 줌</ZoomLabel>
      </Breadcrumb>
    </Canvas>
  </GraphFrame>
);

const ResultBody = styled(PanelBody)`
  height: 157px;
  padding: 7px 8px 0 7px;
`;

const ResultLog = styled.div`
  height: 103px;
  background: #222;
`;

const ClearButton = styled.button`
  align-self: flex-end;
  margin: 11px 6px 0 0;
  color: #808080;
`;

const CenterColumn = () => (
  <Column>
    <EditorToolbar />
    <PanelTabs>
      <PanelTab $tone="off"><ViewportIcon /><span>뷰포트</span><CloseButton aria-label="뷰포트 닫기"><CloseIcon color="#1a1a1a" /></CloseButton></PanelTab>
      <PanelTab $tone="off"><FuncIcon /><span>Construction Scrip</span><CloseButton aria-label="Construction Script 닫기"><CloseIcon color="#1a1a1a" /></CloseButton></PanelTab>
      <PanelTab $tone="accent"><GraphIcon /><span>이벤트그래프</span><CloseButton aria-label="이벤트그래프 닫기"><CloseIcon /></CloseButton></PanelTab>
    </PanelTabs>
    <Graph />
    <PanelTabs $spaced>
      <PanelTab><LogIcon /><span>컴파일러 결과</span><CloseButton aria-label="컴파일러 결과 닫기"><CloseIcon /></CloseButton></PanelTab>
    </PanelTabs>
    <ResultBody>
      <ResultLog />
      <ClearButton>비우기</ClearButton>
    </ResultBody>
  </Column>
);

/* ---------- details ---------- */

const DetailSearch = styled.div`
  display: flex;
  align-items: center;
  flex: none;
  height: 33px;
  padding: 0 7px 0 5px;
`;

const GridButton = styled.button`
  display: grid;
  place-items: center;
  width: 33px;
  height: 28px;
  margin-left: 12px;
  border-radius: 2px;
  background: linear-gradient(#dadada, #aaa);
`;

const DetailScroll = styled.div`
  position: relative;
  flex: 1;
  min-height: 0;
  margin: 0 2px 3px;
  overflow: hidden;
`;

const ScrollTrack = styled.div`
  position: absolute;
  top: 2px;
  right: 2px;
  bottom: 2px;
  width: 15px;
  background: linear-gradient(90deg, transparent 7px, #5c5c5c 7px 8px, transparent 8px);
`;

const ScrollThumb = styled.div`
  height: 55%;
  border: 1px solid #1b1b1b;
  background: #fff;
`;

const CategoryHead = styled.h2`
  display: grid;
  grid-template-columns: 158px 1fr;
  height: 36px;
  border-radius: 3px 3px 0 0;
  background: #2e2e2e;
  color: #e0e0e0;
  font-size: 17px;
  font-weight: 500;
  ${shadowText}
  > span {
    display: flex;
    align-items: center;
    gap: 6px;
    padding-left: 4px;
  }
  &::after { content: ''; border-left: 1px solid #1c1c1c; }
`;

const CategoryBody = styled.div<{ $end: number }>`
  padding-bottom: ${(p) => p.$end}px;
  background: linear-gradient(90deg, transparent 158px, #262626 158px 159px, transparent 159px) no-repeat 0 0 / 100% calc(100% - 2px);
`;

const PropRow = styled.div<{ $h: number }>`
  display: grid;
  grid-template-columns: 158px 1fr;
  align-items: center;
  height: ${(p) => p.$h}px;
  padding-bottom: 1px;
  font-size: 13px;
  color: #d2d2d2;
  > label {
    padding-left: 20px;
    overflow: hidden;
    white-space: nowrap;
  }
`;

const PropValue = styled.div<{ $inset?: boolean }>`
  display: flex;
  align-items: center;
  padding-left: ${(p) => (p.$inset ? 6 : 5)}px;
`;

const NumberBox = styled.div`
  display: flex;
  align-items: center;
  width: 131px;
  height: 20px;
  padding-right: 7px;
  border-radius: 3px;
  background: #d7d7d7;
  input {
    flex: 1;
    min-width: 0;
    padding: 0 0 0 5px;
    border: 0;
    outline: 0;
    background: none;
    color: #111;
  }
`;

const Check = styled.input`
  appearance: none;
  display: grid;
  place-items: center;
  width: 18px;
  height: 18px;
  margin: 0;
  border: 1px solid #8c8c8c;
  border-radius: 2px;
  background: #acacac;
  &:checked { background: #dedede; }
  &:checked::before {
    content: '';
    width: 12px;
    height: 11px;
    background: #6a6a6a;
    clip-path: polygon(0 55%, 20% 38%, 38% 60%, 82% 0, 100% 16%, 42% 100%, 34% 100%);
  }
`;

const SelectBox = styled.div<{ $w: number }>`
  display: flex;
  align-items: center;
  position: relative;
  width: ${(p) => p.$w}px;
  select {
    appearance: none;
    width: 100%;
    height: 25px;
    padding: 0 0 0 ${(p) => (p.$w > 100 ? 5 : 3)}px;
    border: 1px solid #222;
    border-radius: 1px;
    box-shadow: inset 0 0 0 1px rgba(255, 255, 255, 0.25);
    background: linear-gradient(#dcdcdc, #a6a6a6);
    color: #0c0c0c;
  }
  svg {
    position: absolute;
    right: ${(p) => (p.$w > 100 ? 9 : 6)}px;
    pointer-events: none;
  }
`;

const IconButton = styled.button`
  margin-left: 14px;
`;

const Advanced = styled.button`
  display: grid;
  place-items: center;
  width: 100%;
  height: 16px;
  padding-right: 20px;
  background: #464646;
`;

const SpinIcon = () => (
  <svg width="11" height="11" viewBox="0 0 11 11">
    <path d="M4 0H11V7ZM0 4V11H7Z" fill="#111" />
  </svg>
);

const ResetIcon = () => (
  <svg width="10" height="10" viewBox="0 0 10 10">
    <path d="M2 2H8V8H3" fill="none" stroke="#d6d61e" strokeWidth="1.5" />
    <path d="M0 2L4 0V5Z" fill="#d6d61e" />
  </svg>
);

type Prop =
  | { kind: 'num'; label: string; value: string }
  | { kind: 'check'; label: string; value: boolean; modified?: boolean }
  | { kind: 'select'; label: string; value: string }
  | { kind: 'class'; label: string; value: string };

const categories: { title: string; advanced?: boolean; props: Prop[] }[] = [
  {
    title: '기본/디폴트',
    props: [
      { kind: 'num', label: 'Base Turn Rate', value: '45.0' },
      { kind: 'num', label: 'Base Look Up Rate', value: '45.0' },
      { kind: 'num', label: 'Health', value: '1.0' },
      { kind: 'num', label: 'Mana', value: '1.0' },
    ],
  },
  {
    title: '액터 틱',
    advanced: true,
    props: [
      { kind: 'check', label: 'Start with Tick Enabled', value: true },
      { kind: 'num', label: 'Tick Interval (secs)', value: '0.0' },
      { kind: 'check', label: 'Allow Tick Before Begin', value: false },
    ],
  },
  {
    title: '캐릭터',
    props: [
      { kind: 'num', label: 'Jump Max Hold Time', value: '0.0' },
      { kind: 'num', label: 'Jump Max Count', value: '1' },
    ],
  },
  {
    title: '카메라',
    props: [
      { kind: 'num', label: 'Crouched Eye Height', value: '32.0' },
      { kind: 'num', label: 'Base Eye Height', value: '64.0' },
    ],
  },
  {
    title: '폰',
    props: [
      { kind: 'check', label: 'Use Controller Rotation Pitch', value: false },
      { kind: 'check', label: 'Use Controller Rotation Yaw', value: false, modified: true },
      { kind: 'check', label: 'Use Controller Rotation Roll', value: false },
      { kind: 'check', label: 'Can Affect Navigation Generation', value: false },
      { kind: 'select', label: 'Auto Possess Player', value: 'Disabled' },
      { kind: 'select', label: 'Auto Possess AI', value: 'Placed in World' },
      { kind: 'class', label: 'AI Controller Class', value: 'AIController' },
    ],
  },
  {
    title: '리플리케이션',
    props: [
      { kind: 'check', label: 'Only Relevant to Owner', value: false },
      { kind: 'check', label: 'Always Relevant', value: false },
      { kind: 'check', label: 'Replicate Movement', value: true },
      { kind: 'check', label: 'Net Load on Client', value: true },
      { kind: 'check', label: '', value: false },
    ],
  },
];

const rowHeight = { num: 29, check: 29, select: 31, class: 35 };

const PropEditor = ({ prop, id }: { prop: Prop; id: string }) => {
  const [on, setOn] = useState(prop.value === true);
  if (prop.kind === 'num')
    return (
      <PropValue>
        <NumberBox><input id={id} type="text" defaultValue={prop.value} /><SpinIcon /></NumberBox>
      </PropValue>
    );
  if (prop.kind === 'check')
    return (
      <PropValue $inset>
        <Check id={id} type="checkbox" checked={on} onChange={() => setOn(!on)} aria-label={prop.label || '속성'} />
        {prop.modified && <IconButton aria-label="기본값으로 되돌리기"><ResetIcon /></IconButton>}
      </PropValue>
    );
  return (
    <PropValue $inset>
      <SelectBox $w={prop.kind === 'class' ? 91 : 129}>
        <select id={id} defaultValue={prop.value}><option>{prop.value}</option></select>
        <Caret color="#0c0c0c" />
      </SelectBox>
      {prop.kind === 'class' && (
        <>
          <IconButton aria-label="선택 사용"><LeftArrow /></IconButton>
          <IconButton aria-label="탐색"><SearchIcon color="#9a9a9a" size={16} /></IconButton>
          <IconButton aria-label="지우기">
            <svg width="16" height="14" viewBox="0 0 16 14"><path d="M3 2L13 12M13 2L3 12" stroke="#e4e4e4" strokeWidth="4" /></svg>
          </IconButton>
        </>
      )}
    </PropValue>
  );
};

const RightColumn = () => (
  <Column>
    <PanelTabs>
      <PanelTab>
        <DetailsIcon />
        <span>디테일</span>
        <CloseButton aria-label="디테일 닫기"><CloseIcon /></CloseButton>
      </PanelTab>
    </PanelTabs>
    <PanelBody $grow>
      <DetailSearch>
        <SearchField>
          <input type="text" placeholder="디테일 검색" aria-label="디테일 검색" />
          <SearchIcon />
        </SearchField>
        <GridButton aria-label="속성 매트릭스">
          <svg width="17" height="18" viewBox="0 0 17 18">
            <path d="M0 1H17M0 5H17M0 9H17M0 13H17M0 17H17" stroke="#777" strokeWidth="2" strokeDasharray="4 1 5 1 6 0" />
          </svg>
        </GridButton>
        <ViewOptions aria-label="보기 옵션"><EyeIcon /><Caret color="#bdbdbd" /></ViewOptions>
      </DetailSearch>
      <DetailScroll>
        {categories.map((c, ci) => (
          <section key={c.title}>
            <CategoryHead><span><Corner />{c.title}</span></CategoryHead>
            <CategoryBody $end={c.advanced ? 3 : 16}>
              {c.props.map((p, pi) => (
                <PropRow key={p.label} $h={rowHeight[p.kind]}>
                  <label htmlFor={`prop-${ci}-${pi}`}>{p.label}</label>
                  <PropEditor prop={p} id={`prop-${ci}-${pi}`} />
                </PropRow>
              ))}
            </CategoryBody>
            {c.advanced && (
              <Advanced aria-label="고급 표시">
                <svg width="13" height="9" viewBox="0 0 13 9"><path d="M0 0H13V2H0ZM1 3H12L6.5 9Z" fill="#d8d8d8" /></svg>
              </Advanced>
            )}
          </section>
        ))}
        <ScrollTrack><ScrollThumb /></ScrollTrack>
      </DetailScroll>
    </PanelBody>
  </Column>
);

export default function App() {
  return (
    <>
      <GlobalStyle />
      <Defs />
      <Shell>
        <TopBars />
        <Workspace>
          <LeftColumn />
          <CenterColumn />
          <RightColumn />
        </Workspace>
      </Shell>
    </>
  );
}
